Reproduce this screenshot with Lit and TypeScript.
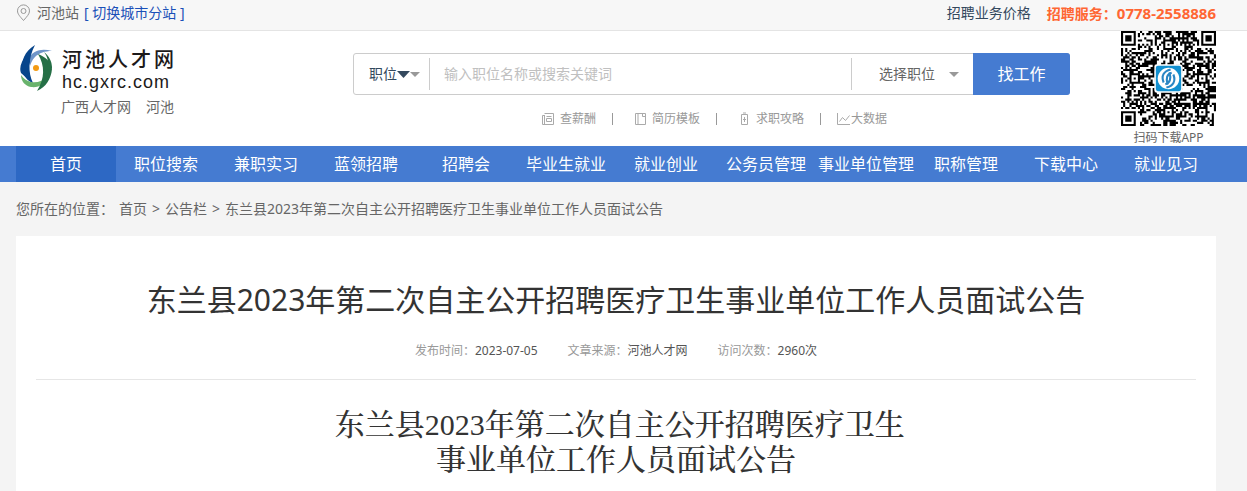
import { LitElement, html, css } from "lit";
import { customElement } from "lit/decorators.js";
import { classMap } from "lit/directives/class-map.js";

const NAV = ["首页", "职位搜索", "兼职实习", "蓝领招聘", "招聘会", "毕业生就业", "就业创业", "公务员管理", "事业单位管理", "职称管理", "下载中心", "就业见习"];

const SIZE = 45;

/** Path of all dark modules of the download code. */
function codePath(): string {
  const finders = [[0, 0], [SIZE - 7, 0], [0, SIZE - 7]];
  const aligns = [[22, 6], [6, 22], [38, 22], [22, 38], [38, 38]];
  let seed = 20235;
  let d = "";
  for (let y = 0; y < SIZE; y++) {
    for (let x = 0; x < SIZE; x++) {
      seed = (seed * 1664525 + 1013904223) % 4294967296;
      let dark = (seed >>> 16) % 100 < 52;
      if (x === 6 || y === 6) dark = (x + y) % 2 === 0;
      for (const [ax, ay] of aligns) {
        const r = Math.max(Math.abs(x - ax), Math.abs(y - ay));
        if (r <= 2) dark = r !== 1;
      }
      for (const [fx, fy] of finders) {
        const r = Math.max(Math.abs(x - fx - 3), Math.abs(y - fy - 3));
        if (r <= 4) dark = r === 3 || r <= 1;
      }
      if (dark) d += `M${x} ${y}h1v1h-1z`;
    }
  }
  return d;
}

@customElement("download-code")
export class DownloadCode extends LitElement {
  static styles = css`
    :host { display: block; }
    svg { display: block; width: 95px; height: 95px; }
  `;
  render() {
    return html`<svg viewBox="0 0 45 45" role="img" aria-label="扫码下载APP">
      <path d=${codePath()} fill="#000"></path>
      <rect x="15.800" y="15.800" width="13.400" height="13.400" rx="1.500" fill="#fff"></rect>
      <rect x="16.500" y="16.500" width="12" height="12" rx="1" fill="#1290d0"></rect>
      <circle cx="22.500" cy="22.500" r="5.100" fill="#fff"></circle>
      <g fill="none" stroke="#2a86c4" stroke-width="1">
        <path d="M23.500 18.200c-3.200.8-4.600 3-3.300 6.200"></path>
        <path d="M24 19.800c-2.200.6-2.900 2.600-1.900 5.600"></path>
        <path d="M21.500 26.800c3.200-.8 4.600-3 3.300-6.200"></path>
        <path d="M21 25.200c2.200-.6 2.900-2.600 1.900-5.600"></path>
      </g>
    </svg>`;
  }
}

@customElement("app-root")
export class AppRoot extends LitElement {
  static styles = css`
    :host {
      display: flex;
      flex-direction: column;
      min-height: 100vh;
      background: #f4f4f4;
      color: #666;
      font: 14px/20px "Noto Sans", "Noto Sans CJK SC", sans-serif;
    }
    * { box-sizing: border-box; }
    a { color: inherit; text-decoration: none; }
    h1, h2, ul, p { margin: 0; padding: 0; font-weight: 400; }
    .wrap { margin: 0 31px 0 16px; }
    .top { background: #f7f7f7; border-bottom: 1px solid #e4e4e4; }
    .top .wrap { display: flex; align-items: center; height: 30px; padding-bottom: 4px; }
    .pin { width: 15px; height: 18px; margin-right: 6px; }
    .switch { color: #1a50b8; margin-left: 5px; }
    .price { margin-left: auto; color: #34495e; }
    .phone { margin-left: 16px; color: #ff6633; font-weight: 700; }
    .number { font-size: 15px; }
    .head { background: #fff; }
    .head .wrap { display: flex; align-items: flex-start; height: 115px; }
    .brand { width: 337px; padding: 13px 0 0 4px; }
    .logo { display: flex; gap: 9px; }
    .mark { width: 33px; height: 48px; }
    .name { display: block; font: 500 20px/30px "Noto Sans CJK SC", sans-serif; color: #1d1a1a; letter-spacing: 3px; }
    .host { display: block; font: 18px/16px "Liberation Sans", sans-serif; color: #1d1a1a; letter-spacing: 1px; }
    .sub { display: flex; gap: 15px; padding: 5px 0 0 41px; }
    .find { width: 717px; padding-top: 22px; }
    .bar { display: flex; align-items: center; height: 42px; border: 1px solid #ccc; border-radius: 3px; }
    .kind, .job { display: flex; align-items: center; height: 32px; border: 0; background: none; font: inherit; padding: 0; }
    .kind { width: 76px; padding-left: 15px; color: #34495e; border-right: 1px solid #ccc; }
    .job { width: 122px; padding-left: 27px; gap: 14px; color: #666; border-left: 1px solid #ccc; }
    .query { flex: 1; min-width: 0; border: 0; outline: 0; padding: 0 14px; font: inherit; background: none; }
    .query::placeholder { color: #c0c0c0; opacity: 1; }
    .go { width: 97px; height: 42px; margin-right: -1px; border: 0; border-radius: 0 3px 3px 0; background: #457bd1; color: #fff; font: inherit; font-size: 16px; }
    .caret { width: 10px; height: 5px; fill: #999; }
    .caret.big { width: 13px; height: 7px; fill: #34495e; }
    .quick { display: flex; align-items: center; padding: 14px 0 0 188px; font-size: 12px; color: #999; }
    .quick a { display: flex; align-items: center; }
    .quick svg { width: 14px; height: 14px; fill: none; stroke: #aaa; margin-right: 5px; }
    .quick .tight svg { margin-right: 0; }
    .bit { width: 1px; height: 12px; background: #999; margin: 0 20px 0 16px; }
    .bit:last-of-type { margin-right: 16px; }
    .app { margin-left: auto; font-size: 12px; text-align: center; line-height: 24px; }
    .nav { background: #457bd1; }
    .nav ul { display: grid; grid-template-columns: repeat(12, minmax(0, 1fr)); list-style: none; }
    .nav a { display: block; color: #fff; font-size: 16px; line-height: 36px; text-align: center; white-space: nowrap; }
    .nav .on { background: #2d68c4; }
    main { flex: 1; display: flex; flex-direction: column; }
    .crumbs { display: flex; gap: 5px; padding: 17px 0; }
    .paper { flex: 1; background: #fff; padding: 40px 20px 0; text-align: center; }
    .title { font-size: 30px; line-height: 48px; color: #333; }
    .meta { display: flex; justify-content: center; gap: 30px; padding: 17px 0 18px; border-bottom: 1px solid #e6e6e6; font-size: 12px; color: #999; }
    .meta b { font-weight: 400; color: #555; }
    .doc { padding-top: 27px; font: 500 30px/35px "Liberation Serif", "Noto Serif CJK SC", "Noto Sans CJK SC", serif; color: #333; }
  `;

  private caret(big = false) {
    return html`<svg class=${classMap({ caret: true, big })} viewBox="0 0 10 5" preserveAspectRatio="none"><path d="M0 0h10L5 5z"></path></svg>`;
  }

  render() {
    return html`
      <div class="top"><div class="wrap">
        <svg class="pin" viewBox="0 0 15 18" fill="none" stroke="#999"><path d="M7.500 16.500C4 12.500 1.500 10 1.500 6.900a6 6 0 0 1 12 0c0 3.100-2.500 5.600-6 9.600z"></path><circle cx="7.500" cy="7" r="2.500"></circle></svg>
        <span>河池站</span><a class="switch" href="#">[ 切换城市分站 ]</a>
        <a class="price" href="#">招聘业务价格</a><span class="phone">招聘服务：<span class="number">0778-2558886</span></span>
      </div></div>
      <header class="head"><div class="wrap">
        <div class="brand">
          <a class="logo" href="#">
            <svg class="mark" viewBox="0 0 33 48">
              <path d="M8 15C13 6 22 4 32 7c-7 0-13 2-17 6-3 3-4 6-5 9z" fill="#6f95c8"></path>
              <path d="M15 1C5 7 0 17 3 28c2 6 5 9 10 11C8 29 8 14 15 1z" fill="#07458b"></path>
              <path d="M7 11C1 17-1 24 1 29l10 9c-4-7-4-14-1-21z" fill="#07458b"></path>
              <path d="M1 31c0 6 4 11 10 12 8 1 14-3 17-10-5 4-11 6-17 5-4-1-7-3-10-7z" fill="#69b36c"></path>
              <path d="M18 10c7 12 7 24-1 37 9-4 14-12 15-22-1-7-6-12-14-15z" fill="#256f46"></path>
              <path d="M24 8c4 5 5 12 3 19l5-3c0-7-3-12-8-16z" fill="#256f46"></path>
              <circle cx="16" cy="24" r="3" fill="#f39a12"></circle>
            </svg>
            <span><span class="name">河池人才网</span><span class="host">hc.gxrc.com</span></span>
          </a>
          <div class="sub"><a href="#">广西人才网</a><a href="#">河池</a></div>
        </div>
        <div class="find">
          <form class="bar">
            <button class="kind" type="button">职位${this.caret(true)}${this.caret()}</button>
            <input class="query" type="text" aria-label="关键词" placeholder="输入职位名称或搜索关键词">
            <button class="job" type="button">选择职位${this.caret()}</button>
            <button class="go" type="button">找工作</button>
          </form>
          <div class="quick">
            <a href="#"><svg viewBox="0 0 14 14"><path d="M3.500 1.500h9v11h-11v-9h2M3.500 3v9M5.500 4.500h5M5.500 6.500h5v3h-5z"></path></svg>查薪酬</a><i class="bit"></i>
            <a href="#"><svg viewBox="0 0 14 14"><path d="M2.500 1.500h10v11h-10zM5 1.500v11M9.500 1.500v3h3"></path></svg>简历模板</a><i class="bit"></i>
            <a href="#"><svg viewBox="0 0 14 14"><path d="M4.500 2.500h6v10h-6zM6 1h3M7.500 5v5M6 7.500h3"></path></svg>求职攻略</a><i class="bit"></i>
            <a class="tight" href="#"><svg viewBox="0 0 14 14"><path d="M.5 1v11.500H13M2.500 9.500l3-4 3 3L12.500 3.500"></path></svg>大数据</a>
          </div>
        </div>
        <div class="app"><download-code></download-code>扫码下载APP</div>
      </div></header>
      <nav class="nav"><ul class="wrap">${NAV.map((t, i) => html`<li><a href="#" class=${classMap({ on: i === 0 })}>${t}</a></li>`)}</ul></nav>
      <main class="wrap">
        <div class="crumbs"><span>您所在的位置：</span><a href="#">首页</a><span>&gt;</span><a href="#">公告栏</a><span>&gt;</span><span>东兰县2023年第二次自主公开招聘医疗卫生事业单位工作人员面试公告</span></div>
        <article class="paper">
          <h1 class="title">东兰县2023年第二次自主公开招聘医疗卫生事业单位工作人员面试公告</h1>
          <div class="meta"><span>发布时间：<b>2023-07-05</b></span><span>文章来源：<b>河池人才网</b></span><span>访问次数：<b>2960次</b></span></div>
          <h2 class="doc">&nbsp;东兰县2023年第二次自主公开招聘医疗卫生<br>事业单位工作人员面试公告</h2>
        </article>
      </main>`;
  }
}
